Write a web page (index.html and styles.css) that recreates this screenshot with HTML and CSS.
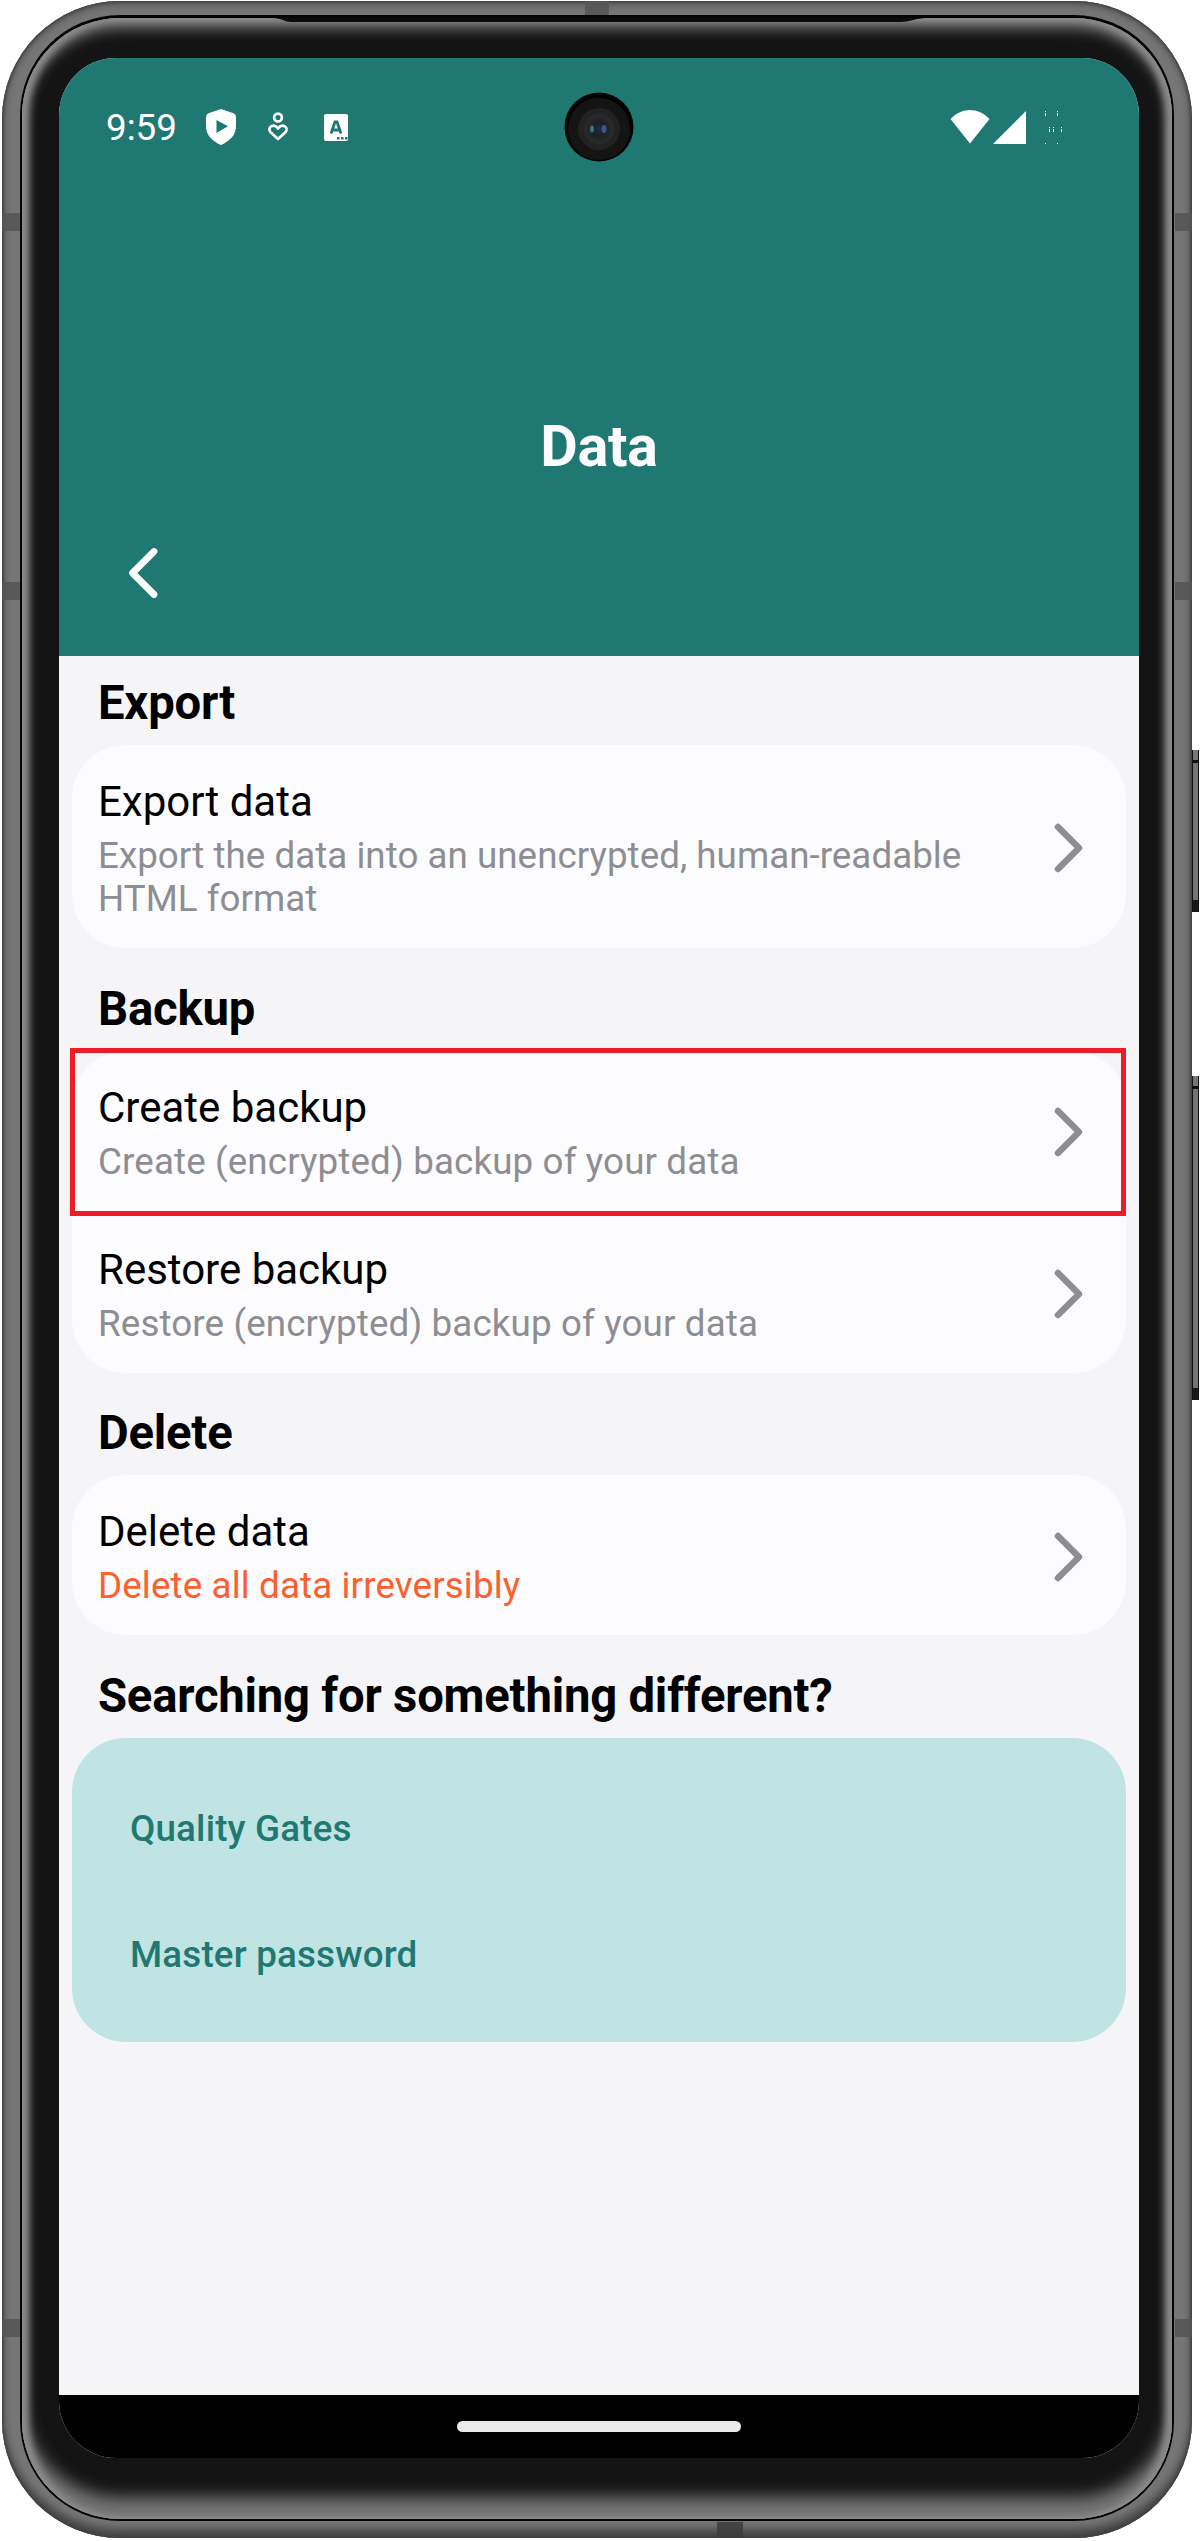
FILE: index.html
```html
<!DOCTYPE html>
<html lang="en">
<head>
<meta charset="utf-8">
<title>Data</title>
<link rel="stylesheet" href="styles.css">
</head>
<body>
<div class="phone">
  <i class="key key-power"></i>
  <i class="key key-volume"></i>
  <div class="rim">
    <i class="band left b1"></i><i class="band left b2"></i><i class="band left b3"></i>
    <i class="band right b1"></i><i class="band right b2"></i><i class="band right b3"></i>
    <i class="band top"></i><i class="band bottom"></i>
    <div class="groove">
      <div class="bezel">
        <svg class="earpiece" width="652" height="5" viewBox="0 0 652 5"><path d="M0 0H652C640 1 636 4 628 4H18C12 4 8 0 0 0Z" fill="#0c0c0c"/></svg>
        <div class="screen">
          <header class="header">
            <div class="status">
              <span class="time">9:59</span>
              <svg class="shield" width="30" height="36" viewBox="0 0 30 36"><path fill="#fff" fill-rule="evenodd" d="M15 0L27.500 4.300Q30 5.200 30 8V17C30 26 24 32 15 36C6 32 0 26 0 17V8Q0 5.200 2.500 4.300ZM10.500 11V24L22 17.300Z"/></svg>
              <svg class="wellbeing" width="22" height="30" viewBox="0 0 22 30" fill="none" stroke="#fff" stroke-width="2.700" stroke-linejoin="round"><circle cx="11" cy="5.500" r="3.900"/><path d="M11 27L3.600 20.300C-.4 15.500 6.500 10.500 11 16.500C15.500 10.500 22.400 15.500 18.400 20.300Z"/></svg>
              <svg class="keyboard" width="24" height="27" viewBox="0 0 24 27"><rect width="24" height="27" rx="2" fill="#fff"/><path d="M7 19.500L11 8H13L17 19.500M8.500 16H15.500" fill="none" stroke="#1f7872" stroke-width="2.800"/><path d="M13 24.200H15.500M17 24.200H19.500M21 24.200H23.500" stroke="#1f7872" stroke-width="2.400"/></svg>
              <svg class="wifi" width="40" height="34" viewBox="0 0 40 34"><path fill="#fff" d="M.5 9C12-3 28-3 39.500 9L20 33.500Z"/></svg>
              <svg class="signal" width="33" height="33" viewBox="0 0 33 33"><path fill="#fff" d="M33 0V33H0Z"/></svg>
              <svg class="battery" width="18" height="34" viewBox="0 0 18 34" fill="#fff"><path d="M0 1h1v1H0zM0 3h1v3H0zM12 1h1v1h-1zM12 3h1v3h-1zM4 17h1v1H4zM4 19h1v3H4zM8 17h1v1H8zM8 19h1v3H8zM16 17h1v1h-1zM16 19h1v3h-1zM0 33h1v1H0zM12 33h1v1h-1z"/></svg>
            </div>
            <h1 class="page-title">Data</h1>
            <svg class="back" width="36" height="56" viewBox="0 0 36 56"><path d="M29 6.500L7.500 28L29 49.500" fill="none" stroke="#fcfcfe" stroke-width="6.800" stroke-linecap="round" stroke-linejoin="round"/></svg>
          </header>
          <main class="content">
            <h2 class="section">Export</h2>
            <div class="card">
              <div class="row">
                <div class="copy"><div class="name">Export data</div><div class="note long">Export the data into an unencrypted, human-readable HTML format</div></div>
                <svg class="chev" width="32" height="52" viewBox="0 0 32 52"><path d="M6 5L27 26L6 47"/></svg>
              </div>
            </div>
            <h2 class="section">Backup</h2>
            <div class="card">
              <div class="row marked">
                <div class="copy"><div class="name">Create backup</div><div class="note">Create (encrypted) backup of your data</div></div>
                <svg class="chev" width="32" height="52" viewBox="0 0 32 52"><path d="M6 5L27 26L6 47"/></svg>
              </div>
              <div class="row">
                <div class="copy"><div class="name">Restore backup</div><div class="note">Restore (encrypted) backup of your data</div></div>
                <svg class="chev" width="32" height="52" viewBox="0 0 32 52"><path d="M6 5L27 26L6 47"/></svg>
              </div>
            </div>
            <h2 class="section">Delete</h2>
            <div class="card">
              <div class="row">
                <div class="copy"><div class="name">Delete data</div><div class="note danger">Delete all data irreversibly</div></div>
                <svg class="chev" width="32" height="52" viewBox="0 0 32 52"><path d="M6 5L27 26L6 47"/></svg>
              </div>
            </div>
            <h2 class="section">Searching for something different?</h2>
            <div class="related">
              <a class="link">Quality Gates</a>
              <a class="link">Master password</a>
            </div>
          </main>
          <footer class="nav"><i class="pill"></i></footer>
          <svg class="camera" width="70" height="72" viewBox="0 0 70 72">
            <defs><radialGradient id="lens"><stop offset="0" stop-color="#222b3e"/><stop offset=".45" stop-color="#1d1f24"/><stop offset="1" stop-color="#2b2b2b"/></radialGradient></defs>
            <circle cx="35" cy="36" r="34.500" fill="#030303"/><circle cx="35" cy="38" r="31" fill="#141414"/><circle cx="35" cy="38" r="21" fill="#222"/><circle cx="35" cy="38" r="15" fill="url(#lens)"/>
            <ellipse cx="28" cy="38" rx="2" ry="3.500" fill="#35737f"/><ellipse cx="40" cy="38" rx="2.500" ry="4" fill="#3d568f"/>
          </svg>
        </div>
      </div>
    </div>
  </div>
</div>
</body>
</html>
```
FILE: styles.css
```css
* { box-sizing: border-box; }
body { margin: 0; background: #fff; font-family: Roboto, "Liberation Sans", sans-serif; }
.phone { position: relative; width: 1200px; height: 2541px; padding: 1px 8px 3px 2px; overflow: hidden; }

/* metal rim */
.rim {
  position: relative; height: 2537px; padding: 14px 18px 17px;
  border-radius: 118px; background: #767676;
  box-shadow: inset 0 0 3px 1px #3c3c3c, inset 0 4px 7px #555, inset 0 -9px 9px #454545;
}
.groove { height: 2506px; padding: 3px 2px 2px; border-radius: 100px; background: #050505; }
.bezel {
  position: relative; height: 2501px; padding: 40px 37px 61px 37px; border-radius: 98px; background: #141414;
  box-shadow: inset 0 0 2px 1px #888, inset 5px 0 7px 1px #8c8c8c, inset -5px 0 7px 1px #8c8c8c,
    inset 0 9px 14px 1px #808080, inset 0 -21px 16px 1px #757575;
}
.earpiece { position: absolute; left: 251px; top: 0; }
.band { position: absolute; background: #555; opacity: .85; }
.band.left { left: 0; width: 18px; height: 18px; }
.band.right { right: 0; width: 17px; height: 18px; }
.band.b1 { top: 212px; }
.band.b2 { top: 581px; }
.band.b3 { top: 2318px; }
.band.top { left: 583px; top: 0; width: 24px; height: 14px; }
.band.bottom { left: 715px; bottom: 0; width: 26px; height: 16px; background: #3c3c3c; }
.key { position: absolute; right: 1px; width: 8px; border: solid #111; border-width: 0 1px 0 2px; background: #737373; }
.key::before { content: ""; display: block; height: 10px; background: #777; border-bottom: 3px solid #111; }
.key::after { content: ""; position: absolute; left: 0; right: 0; bottom: 0; height: 12px; background: #181818; }
.key-power { top: 750px; height: 162px; }
.key-volume { top: 1076px; height: 324px; }

/* display */
.screen { position: relative; display: flex; flex-direction: column; width: 1080px; height: 2400px; border-radius: 57px; overflow: hidden; background: #f5f5f8; }
.header { height: 598px; flex: none; display: flex; flex-direction: column; background: #1f7872; }
.status { display: flex; height: 138px; padding: 0 76px 0 47px; align-items: center; }
.time { width: 100px; padding-top: 2px; color: #fff; font-size: 36.750px; line-height: 44px; }
.wellbeing { margin-left: 31px; }
.keyboard { margin-left: 35px; }
.wifi { margin-left: auto; }
.signal { margin-left: 3px; }
.battery { margin-left: 19px; }
.page-title { margin: 216px 0 0; text-align: center; color: #fcfcfe; font-size: 57.750px; line-height: 68px; font-weight: 700; letter-spacing: -.4px; }
.back { margin: 65px 0 0 66px; }
.camera { position: absolute; left: 505px; top: 33px; }

.content { flex: 1; padding: 0 13px; }
.section { margin: 0; padding: 32.500px 0 14px 26px; font-size: 47.250px; line-height: 56px; font-weight: 700; letter-spacing: -.22px; color: #000; white-space: nowrap; }
.section:first-child { padding-top: 19px; }
.card { display: flex; flex-direction: column; gap: 2px; width: 1054px; border-radius: 54px; background: #fcfcfe; }
.row { position: relative; display: flex; align-items: center; justify-content: space-between; padding: 32px 42px 28px 26px; }
.marked::after { content: ""; position: absolute; inset: -2.500px 0 -5.500px -2px; border: 5px solid #ed1c27; }
.copy { width: 900px; }
.name { font-size: 42px; line-height: 50px; color: #000; }
.note { margin-top: 7px; font-size: 36.750px; line-height: 43px; letter-spacing: .13px; color: #8e8e92; }
.note.long { letter-spacing: .03px; }
.danger { color: #fc602f; }
.chev { margin-bottom: 1px; fill: none; stroke: #8e8e92; stroke-width: 6.500; stroke-linecap: round; stroke-linejoin: round; }
.related { display: flex; flex-direction: column; gap: 83px; width: 1054px; height: 304px; padding: 69px 58px; border-radius: 54px; background: #bfe4e3; }
.link { font-size: 36.750px; line-height: 43px; font-weight: 500; letter-spacing: .18px; color: #1f7872; }
.nav { height: 63px; flex: none; display: flex; justify-content: center; align-items: flex-start; padding-top: 26px; background: #000; }
.pill { width: 284px; height: 11px; border-radius: 6px; background: #ebebeb; }
```
